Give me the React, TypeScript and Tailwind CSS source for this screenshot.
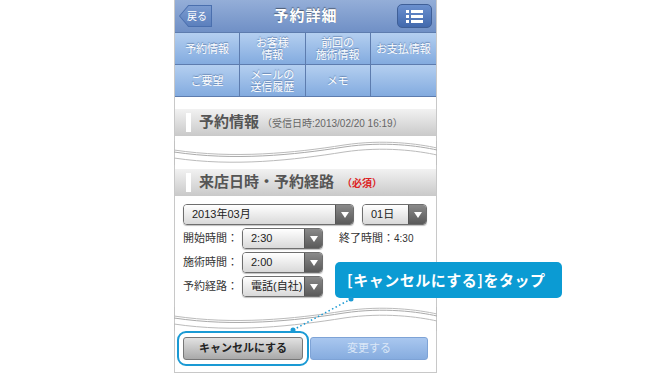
import { ReactNode } from 'react';

const font = { fontFamily: '"Liberation Sans", "Noto Sans CJK JP", sans-serif' };

function Select({ w, value }: { w: string; value: string }) {
  return (
    <div className={`${w} h-[21px] flex rounded-[4px] border border-[#6e6e6e] overflow-hidden shadow-[0_1px_1px_rgba(0,0,0,0.25)]`}>
      <div className="flex-1 bg-gradient-to-b from-[#ffffff] to-[#d9d9d9] text-[11px] text-[#222] pl-[8px] flex items-center">{value}</div>
      <div className="w-[18px] bg-gradient-to-b from-[#8a8a8a] to-[#5a5a5a] border-l border-[#555] flex items-center justify-center">
        <div className="w-0 h-0 border-l-[4px] border-r-[4px] border-t-[6px] border-l-transparent border-r-transparent border-t-white" />
      </div>
    </div>
  );
}

function SectionHead({ children }: { children: ReactNode }) {
  return (
    <div className="h-[27px] bg-gradient-to-b from-[#f2f2f2] to-[#c9c9c9] flex items-center">
      <div className="ml-[11px] w-[5px] h-[19px] bg-white" />
      <div className="ml-[8px] flex items-baseline text-[#555]">{children}</div>
    </div>
  );
}

function Wave() {
  return (
    <svg width="263" height="24" viewBox="0 0 263 24" className="block">
      <path d="M0 0 L0 9 C60 18 120 12 170 4 C210 -2 245 3 263 7 L263 0" fill="none" stroke="#bbb" />
      <path d="M0 11 C60 20 120 14 170 6 C210 0 245 5 263 9" fill="none" stroke="#aaa" />
      <path d="M0 24 L0 17 C60 26 120 19 170 11 C210 5 245 10 263 14 L263 24" fill="none" stroke="#bbb" />
    </svg>
  );
}

const tabs = [
  ['予約情報'],
  ['お客様', '情報'],
  ['前回の', '施術情報'],
  ['お支払情報'],
  ['ご要望'],
  ['メールの', '送信履歴'],
  ['メモ'],
  [''],
];

export default function App() {
  return (
    <div className="w-[670px] h-[390px] bg-white relative overflow-hidden" style={font}>
      <div className="ml-[174px] w-[263px] border-x border-[#c8c8c8] border-b">
        {/* top bar */}
        <div className="h-[32px] bg-gradient-to-b from-[#94aed8] to-[#7090c6] flex items-center justify-between px-[4px] relative">
          <div className="h-[22px] w-[33px] bg-[#4a6fae] [clip-path:polygon(0_50%,28%_0,100%_0,100%_100%,28%_100%)] flex items-center justify-center">
            <div className="h-[20px] w-[31px] bg-gradient-to-b from-[#7b9bd0] to-[#5c80bd] [clip-path:polygon(0_50%,28%_0,100%_0,100%_100%,28%_100%)] text-white text-[10px] flex items-center justify-end pr-[4px]">戻る</div>
          </div>
          <div className="absolute left-0 right-0 text-center text-white font-bold text-[15px] tracking-[1px] [text-shadow:0_-1px_1px_rgba(0,0,0,0.45)] pointer-events-none">予約詳細</div>
          <div className="h-[24px] w-[35px] rounded-[5px] border border-[#3f5f97] bg-gradient-to-b from-[#6b90cf] to-[#4269ad] flex flex-col items-center justify-center gap-[2px]">
            {[0, 1, 2].map((i) => (
              <div key={i} className="flex gap-[2px]">
                <div className="w-[3px] h-[3px] bg-white" />
                <div className="w-[12px] h-[3px] bg-white" />
              </div>
            ))}
          </div>
        </div>
        {/* tabs */}
        <div className="grid grid-cols-4 border-t border-[#5d7cae]">
          {tabs.map((t, i) => (
            <div
              key={i}
              className={`h-[32px] bg-gradient-to-b from-[#b4cff0] to-[#83abdf] border-b border-[#5d7cae] ${i % 4 !== 3 ? 'border-r' : ''} border-r-[#5d7cae] flex flex-col items-center justify-center text-white text-[11px] leading-[12px] [text-shadow:0_-1px_1px_rgba(60,90,140,0.6)]`}
            >
              {t.map((s, j) => (
                <span key={j}>{s}</span>
              ))}
            </div>
          ))}
        </div>
        <div className="h-[12px]" />
        <SectionHead>
          <span className="text-[15px] font-bold">予約情報</span>
          <span className="text-[10px] ml-[3px] text-[#666]">（受信日時:2013/02/20 16:19）</span>
        </SectionHead>
        <div className="h-[5px]" />
        <div className="-mx-px">
          <Wave />
        </div>
        <div className="h-[4px]" />
        <SectionHead>
          <span className="text-[15px] font-bold">来店日時・予約経路</span>
          <span className="text-[10px] ml-[8px] text-[#d22] font-bold">（必須）</span>
        </SectionHead>
        {/* form */}
        <div className="px-[8px] pt-[8px] pb-[10px] flex flex-col gap-[3px]">
          <div className="flex gap-[8px]">
            <Select w="w-[171px]" value="2013年03月" />
            <Select w="w-[65px]" value="01日" />
          </div>
          <div className="flex items-center">
            <span className="w-[59px] text-[11px] text-[#333]">開始時間：</span>
            <Select w="w-[81px]" value="2:30" />
            <span className="ml-[16px] text-[11px] text-[#333]">終了時間：<span className="text-[10px]">4:30</span></span>
          </div>
          <div className="flex items-center">
            <span className="w-[59px] text-[11px] text-[#333]">施術時間：</span>
            <Select w="w-[81px]" value="2:00" />
          </div>
          <div className="flex items-center">
            <span className="w-[59px] text-[11px] text-[#333]">予約経路：</span>
            <Select w="w-[81px]" value="電話(自社)" />
          </div>
        </div>
        <div className="-mx-px">
          <Wave />
        </div>
        {/* buttons */}
        <div className="flex gap-[7px] px-[8px] pt-[6px] pb-[12px]">
          <div className="w-[120px] h-[23px] rounded-[3px] border border-[#777] bg-gradient-to-b from-[#e2e2e2] to-[#a9a9a9] flex items-center justify-center text-[11px] font-bold text-[#222] outline-[2px] outline outline-[#1a9ad4] outline-offset-[4px]">
            キャンセルにする
          </div>
          <div className="w-[118px] h-[23px] rounded-[3px] border border-[#7ea3d6] bg-gradient-to-b from-[#a9c7ef] to-[#86acdf] flex items-center justify-center text-[11px] text-[#dbe7f7]">
            変更する
          </div>
        </div>
      </div>
      {/* callout */}
      <div className="absolute left-[335px] top-[262px] w-[227px] h-[36px] rounded-[5px] bg-[#0b9bd3] flex items-center pl-[12px] text-white font-bold text-[15px] tracking-[0.5px]" style={{ fontFamily: '"Noto Sans CJK JP", sans-serif' }}>
        [キャンセルにする]をタップ
      </div>
      <svg className="absolute left-0 top-0 pointer-events-none" width="670" height="390">
        <line x1="351" y1="299" x2="293" y2="330" stroke="#1a9ad4" strokeWidth="1.5" strokeDasharray="1.5 2.5" />
        <circle cx="351" cy="299" r="2.5" fill="#1a9ad4" />
        <circle cx="293" cy="330" r="2.5" fill="#1a9ad4" />
      </svg>
    </div>
  );
}
